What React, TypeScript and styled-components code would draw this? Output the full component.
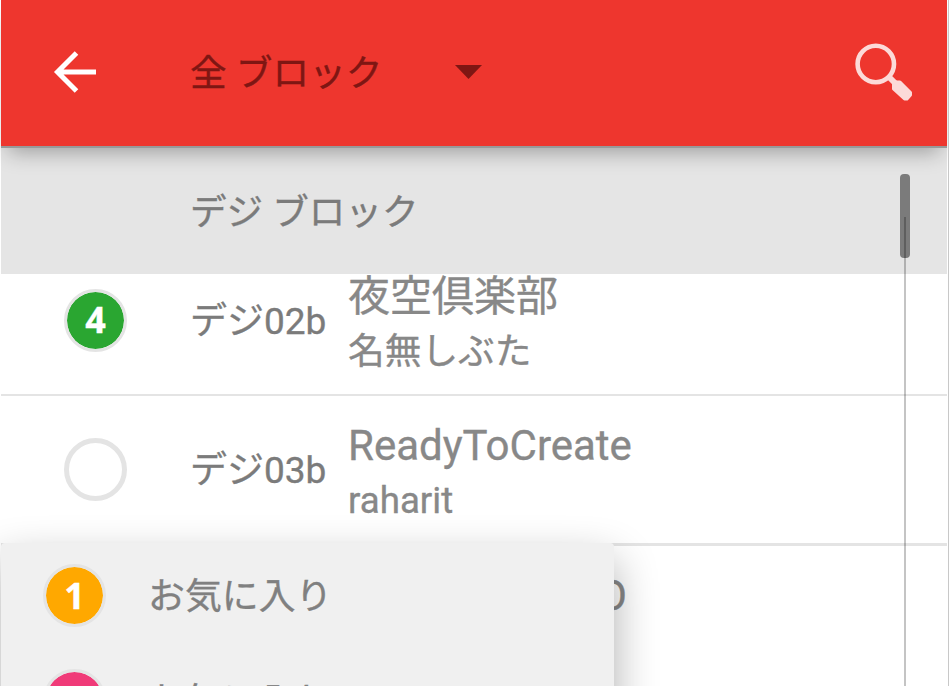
import React from "react";
import styled, { createGlobalStyle } from "styled-components";

const GlobalStyle = createGlobalStyle`
  html, body { margin: 0; padding: 0; background: #fff; overflow: hidden; }
  *, *::before, *::after { box-sizing: border-box; }
`;

const Screen = styled.div`
  position: relative;
  display: flex;
  flex-direction: column;
  width: 949px;
  height: 686px;
  padding: 0 1px;
  overflow: hidden;
  border-right: 1px solid #c8c8c8;
  background: #fff;
  color: #7b7b7b;
  font-family: Roboto, "Noto Sans CJK JP", sans-serif;
  -webkit-text-stroke: 0.35px currentColor;
`;

const AppBar = styled.header`
  position: relative;
  z-index: 3;
  display: flex;
  align-items: center;
  flex: none;
  height: 148px;
  padding: 0 33px 2px 52px;
  background: #ee362e;
  border-bottom: 2px solid #999;
  box-shadow: 0 11px 20px -7px rgba(0, 0, 0, 0.32);
`;

const BackIcon = styled.svg`
  width: 46px;
  height: 46px;
  margin-right: 91px;
`;

const Heading = styled.h1`
  margin: 0;
  padding-top: 3px;
  width: 265px;
  font-size: 36.7px;
  font-weight: 400;
  line-height: 48px;
  white-space: nowrap;
  color: #7f1613;
`;

const Caret = styled.svg`
  width: 28px;
  height: 14px;
`;

const SearchIcon = styled.svg`
  width: 60px;
  height: 60px;
  margin-left: auto;
`;

const Section = styled.div`
  position: relative;
  z-index: 2;
  flex: none;
  height: 126px;
  padding: 41px 0 0 189px;
  background: #e5e5e5;
  font-size: 36.6px;
  line-height: 48px;
`;

const List = styled.div`
  flex: none;
  margin-top: -28px;
`;

const Row = styled.div<{ $rule: number }>`
  display: flex;
  align-items: center;
  height: 150px;
  padding-left: 63px;
  border-bottom: ${(p) => p.$rule}px solid #e4e4e4;
`;

const Badge = styled.div<{ $fill?: string }>`
  flex: none;
  display: flex;
  align-items: center;
  justify-content: center;
  width: 63px;
  height: 63px;
  border: ${(p) => (p.$fill ? "3px" : "5px")} solid #e4e4e4;
  border-radius: 50%;
  background: ${(p) => p.$fill ?? "#fff"};
  background-clip: padding-box;
  color: #fff;
  font: 700 36px/56px "Open Sans", "Noto Sans", sans-serif;
`;

const Code = styled.div`
  width: 158px;
  margin-left: 63px;
  padding-top: 3px;
  font-size: 37px;
  line-height: 48px;
  white-space: nowrap;
`;

const Info = styled.div<{ $indent?: number }>`
  height: 107px;
  padding-left: ${(p) => p.$indent ?? 0}px;
  color: #888;
  white-space: nowrap;
`;

const Title = styled.div`
  font-size: 42px;
  line-height: 60px;
`;

const Artist = styled.div`
  font-size: 36.7px;
  line-height: 49px;
`;

const ScrollTrack = styled.div`
  position: absolute;
  z-index: 5;
  top: 217px;
  bottom: 0;
  left: 904px;
  width: 2px;
  background: rgba(0, 0, 0, 0.23);
`;

const ScrollThumb = styled.div`
  position: absolute;
  z-index: 4;
  top: 174px;
  left: 900px;
  width: 10px;
  height: 84px;
  border-radius: 4px;
  background: #7b7b7b;
`;

const Popup = styled.div`
  position: absolute;
  z-index: 4;
  top: 543px;
  left: 1px;
  width: 613px;
  height: 330px;
  border-radius: 4px;
  background: #f0f0f0;
  box-shadow: 0 18px 44px rgba(0, 0, 0, 0.32);
`;

const Option = styled.div`
  display: flex;
  align-items: center;
  gap: 42px;
  height: 105px;
  padding-left: 42px;
  font-size: 36.9px;
  line-height: 48px;
  color: #808080;
`;

const OptionLabel = styled.span`
  padding-top: 3px;
`;

const rows = [
  { badge: "4", fill: "#2aa631", code: "デジ02b", title: "夜空倶楽部", artist: "名無しぶた", rule: 2 },
  { code: "デジ03b", title: "ReadyToCreate", artist: "raharit", rule: 3 },
  { code: "", title: "O", artist: "", indent: 250, rule: 3 },
];

const options = [
  { badge: "1", fill: "#ffa800", label: "お気に入り" },
  { badge: "2", fill: "#f03a78", label: "お気に入り" },
];

export default function App() {
  return (
    <Screen lang="ja">
      <GlobalStyle />
      <AppBar>
        <BackIcon viewBox="0 0 46 46" fill="none" stroke="#fff" strokeWidth="5">
          <path d="M23.5 4 L4.5 23 L23.5 42 M4.5 23 H43" />
        </BackIcon>
        <Heading>全 ブロック</Heading>
        <Caret viewBox="0 0 28 14">
          <path d="M0 0 H27 L13.5 14 Z" fill="#7f1613" />
        </Caret>
        <SearchIcon viewBox="0 0 60 60" fill="none" stroke="#fcdad8">
          <circle cx="21.8" cy="22" r="18.2" strokeWidth="4.6" />
          <path d="M34 34 L42 42" strokeWidth="6" />
          <path
            d="M39.5 42.5 L42 40 H46 L56.5 50.5 V53 L53 57 H50.5 L39.5 47 Z"
            fill="#fcdad8"
            strokeWidth="3"
            strokeLinejoin="round"
          />
        </SearchIcon>
      </AppBar>
      <Section>デジ ブロック</Section>
      <List>
        {rows.map((r) => (
          <Row key={r.title} $rule={r.rule}>
            <Badge $fill={r.fill}>{r.badge}</Badge>
            <Code>{r.code}</Code>
            <Info $indent={r.indent}>
              <Title>{r.title}</Title>
              <Artist>{r.artist}</Artist>
            </Info>
          </Row>
        ))}
      </List>
      <ScrollThumb />
      <ScrollTrack />
      <Popup>
        {options.map((o) => (
          <Option key={o.badge}>
            <Badge $fill={o.fill}>{o.badge}</Badge>
            <OptionLabel>{o.label}</OptionLabel>
          </Option>
        ))}
      </Popup>
    </Screen>
  );
}
